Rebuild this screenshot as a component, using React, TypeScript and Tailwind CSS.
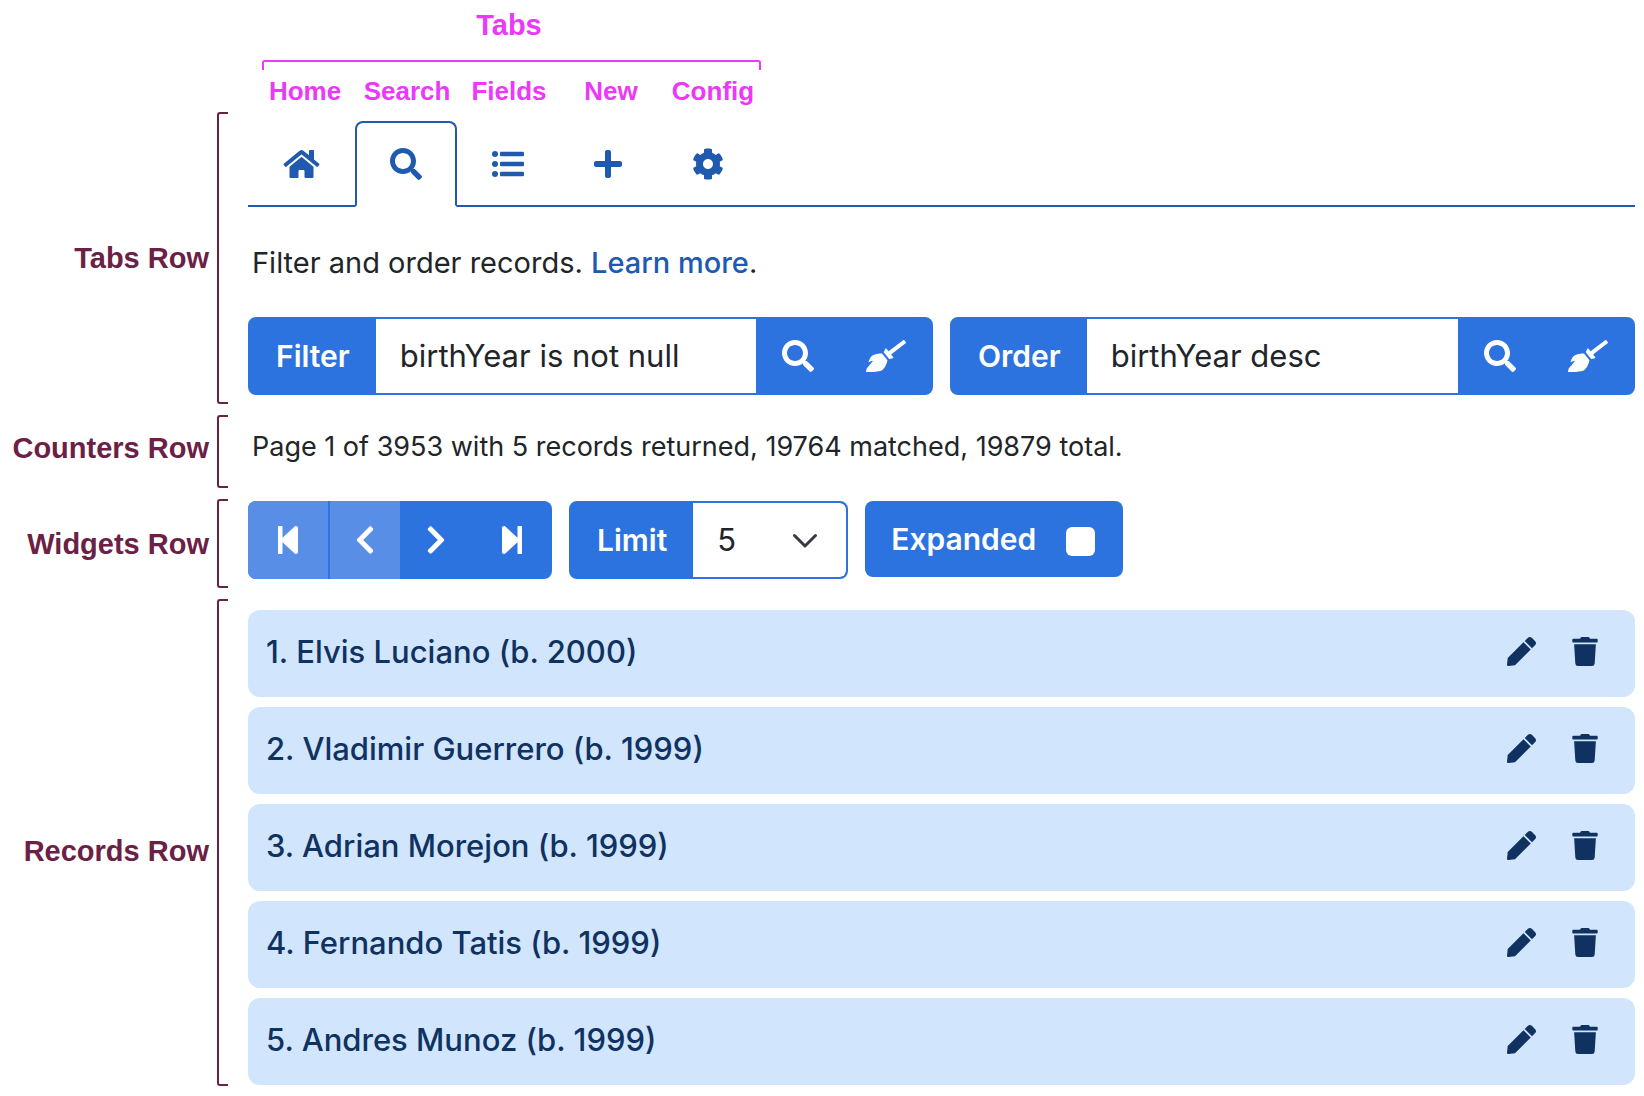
import type { ReactNode } from "react";
import {
  FaBroom,
  FaChevronLeft,
  FaChevronRight,
  FaCog,
  FaHome,
  FaPen,
  FaPlus,
  FaSearch,
  FaStepBackward,
  FaStepForward,
  FaTrash,
} from "react-icons/fa";

function ListIcon() {
  return (
    <svg viewBox="0 0 512 512" fill="currentColor" className="size-8">
      <circle cx="48" cy="96" r="48" />
      <circle cx="48" cy="256" r="48" />
      <circle cx="48" cy="416" r="48" />
      <rect x="128" y="60" width="384" height="72" rx="16" />
      <rect x="128" y="220" width="384" height="72" rx="16" />
      <rect x="128" y="380" width="384" height="72" rx="16" />
    </svg>
  );
}

const tabs = [
  { name: "Home", icon: <FaHome className="h-8 w-[37px]" /> },
  { name: "Search", icon: <FaSearch className="size-8" />, active: true },
  { name: "Fields", icon: <ListIcon /> },
  { name: "New", icon: <FaPlus className="h-8 w-7" /> },
  { name: "Config", icon: <FaCog className="size-8" /> },
];

const records = [
  "1. Elvis Luciano (b. 2000)",
  "2. Vladimir Guerrero (b. 1999)",
  "3. Adrian Morejon (b. 1999)",
  "4. Fernando Tatis (b. 1999)",
  "5. Andres Munoz (b. 1999)",
];

function Row({ label, labelClass = "", children }: { label: string; labelClass?: string; children: ReactNode }) {
  return (
    <section className="flex">
      <div
        className={`flex w-[209px] shrink-0 items-center justify-end whitespace-nowrap font-['Liberation_Sans',Arial,sans-serif] text-[29px] leading-8 font-bold text-[#6b2145] ${labelClass}`}
      >
        {label}
      </div>
      <div className="mr-5 ml-2 w-[11px] shrink-0 rounded-l-[3px] border-y-2 border-l-2 border-[#6b2145]" />
      <div className="min-w-0 flex-1">{children}</div>
    </section>
  );
}

function QueryGroup({ id, label, value }: { id: string; label: string; value: string }) {
  return (
    <div className="flex h-[78px] min-w-0 flex-1 overflow-hidden rounded-lg border-2 border-[#2d73df] bg-[#2d73df] text-white">
      <label htmlFor={id} className="flex items-center px-[26px] font-semibold">
        {label}
      </label>
      <input
        id={id}
        defaultValue={value}
        className="min-w-0 flex-1 bg-white px-6 text-[31px] text-[#212529] outline-none"
      />
      <button type="button" aria-label={`Apply ${label}`} className="px-[26px]">
        <FaSearch className="size-8" />
      </button>
      <button type="button" aria-label={`Clear ${label}`} className="pr-[25px] pl-[26px]">
        <FaBroom className="h-8 w-10" />
      </button>
    </div>
  );
}

export default function App() {
  return (
    <main className="bg-white pt-2 pr-[9px] pb-[10px] font-['Inter',sans-serif] text-[30px] leading-[48px] text-[#212529]">
      <header className="ml-[254px] w-[510px] font-['Liberation_Sans',Arial,sans-serif] font-bold text-[#ec38f8]">
        <h1 className="text-center text-[29px] leading-[34px]">Tabs</h1>
        <div className="mt-[18px] mr-[3px] ml-2 h-[10px] rounded-t-[3px] border-2 border-b-0 border-[#ec38f8]" />
        <div className="grid grid-cols-5 pt-1 text-center text-[26px] leading-[34px]">
          {tabs.map((t) => (
            <span key={t.name}>{t.name}</span>
          ))}
        </div>
      </header>

      <div className="mt-1 flex flex-col gap-[11px]">
        <Row label="Tabs Row">
          <nav className="mt-[9px] flex border-b-2 border-[#205aaf] text-[#205aaf]">
            {tabs.map((t) => (
              <button
                key={t.name}
                type="button"
                aria-label={t.name}
                className={
                  t.active
                    ? "-mb-[2px] h-[86px] rounded-t-lg border-2 border-[#205aaf] border-b-white px-[33px]"
                    : "-mb-[2px] h-[86px] border-2 border-transparent px-[33px]"
                }
              >
                {t.icon}
              </button>
            ))}
          </nav>
          <p className="mt-8 pl-1 text-[29px]">
            Filter and order records.{" "}
            <a href="#learn" className="font-medium text-[#205aaf]">
              Learn more
            </a>
            .
          </p>
          <div className="mt-[30px] mb-[9px] flex gap-[17px]">
            <QueryGroup id="filter" label="Filter" value="birthYear is not null" />
            <QueryGroup id="order" label="Order" value="birthYear desc" />
          </div>
        </Row>

        <Row label="Counters Row" labelClass="pb-2">
          <p className="pt-2 pb-[17px] pl-1 text-[27px]">
            Page 1 of 3953 with 5 records returned, 19764 matched, 19879 total.
          </p>
        </Row>

        <Row label="Widgets Row">
          <div className="flex items-start gap-[17px] pt-[2px] pb-[9px] text-white">
            <div className="flex h-[78px] overflow-hidden rounded-lg bg-[#2d73df]">
              <button type="button" disabled aria-label="First page" className="mr-[2px] bg-[#588ee5] px-[26px]">
                <FaStepBackward className="h-8 w-7" />
              </button>
              <button type="button" disabled aria-label="Previous page" className="bg-[#588ee5] px-[25px]">
                <FaChevronLeft className="h-8 w-5" />
              </button>
              <button type="button" aria-label="Next page" className="px-[26px]">
                <FaChevronRight className="h-8 w-5" />
              </button>
              <button type="button" aria-label="Last page" className="px-[26px]">
                <FaStepForward className="h-8 w-7" />
              </button>
            </div>
            <div className="relative flex h-[78px] overflow-hidden rounded-lg border-2 border-[#2d73df] bg-[#2d73df]">
              <label htmlFor="limit" className="flex items-center px-[26px] font-semibold">
                Limit
              </label>
              <select
                id="limit"
                defaultValue="5"
                className="w-[153px] appearance-none rounded-r-md bg-white pl-6 text-[31px] text-[#212529] outline-none"
              >
                <option>5</option>
                <option>10</option>
                <option>20</option>
              </select>
              <svg
                viewBox="0 0 16 16"
                className="pointer-events-none absolute top-[25px] right-[29px] size-6"
                fill="none"
                stroke="#343a40"
                strokeWidth="2"
                strokeLinecap="round"
                strokeLinejoin="round"
              >
                <path d="m1 5 7 7 7-7" />
              </svg>
            </div>
            <label className="flex h-[76px] items-center gap-[30px] rounded-lg bg-[#2d73df] pr-7 pl-[26px] font-semibold">
              Expanded
              <input type="checkbox" className="mt-1 size-[29px] appearance-none rounded-md bg-white" />
            </label>
          </div>
        </Row>

        <Row label="Records Row" labelClass="pt-4">
          <ul className="flex flex-col gap-[10px] pt-[11px] pb-px">
            {records.map((r) => (
              <li
                key={r}
                className="flex h-[87px] items-center rounded-xl bg-[#d1e5fd] pr-[37px] pb-1 pl-[18px] text-[31px] font-medium text-[#103261]"
              >
                <span className="flex-1">{r}</span>
                <button type="button" aria-label={`Edit ${r}`} className="mr-9">
                  <FaPen className="size-[29px]" />
                </button>
                <button type="button" aria-label={`Delete ${r}`}>
                  <FaTrash className="h-[29px] w-[26px]" />
                </button>
              </li>
            ))}
          </ul>
        </Row>
      </div>
    </main>
  );
}
